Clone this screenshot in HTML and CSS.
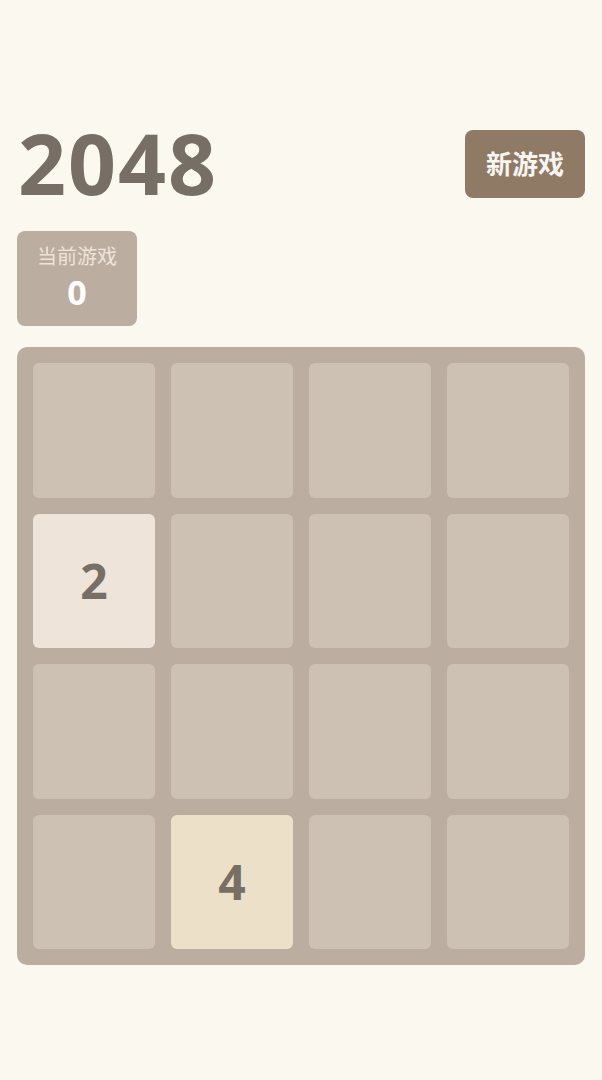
FILE: index.html
```html
<!DOCTYPE html>
<html lang="zh-CN">
<head>
    <meta charset="UTF-8">
    <meta name="viewport" content="width=device-width, initial-scale=1.0">
    <title>2048</title>
    <link rel="stylesheet" href="styles.css">
</head>
<body>

    <div class="game">
        <!-- Title and restart -->
        <div class="header">
            <h1 class="title">2048</h1>
            <button class="new-game">新游戏</button>
        </div>

        <!-- Score -->
        <div class="score-box">
            <div class="score-label">当前游戏</div>
            <div class="score-value">0</div>
        </div>

        <!-- Board -->
        <div class="board">
            <div class="cell"></div>
            <div class="cell"></div>
            <div class="cell"></div>
            <div class="cell"></div>

            <div class="cell tile-2">2</div>
            <div class="cell"></div>
            <div class="cell"></div>
            <div class="cell"></div>

            <div class="cell"></div>
            <div class="cell"></div>
            <div class="cell"></div>
            <div class="cell"></div>

            <div class="cell"></div>
            <div class="cell tile-4">4</div>
            <div class="cell"></div>
            <div class="cell"></div>
        </div>
    </div>

</body>
</html>
```

FILE: styles.css
```css
body {
    font-family: 'Open Sans', 'Noto Sans CJK SC', sans-serif;
    background-color: #faf8ef;
    margin: 0;
    color: #776e65;
}

.game {
    padding: 130px 17px 0;
}

.header {
    display: flex;
    justify-content: space-between;
    align-items: center;
    height: 68px;
}

.title {
    margin: -2px 0 0 1px;
    font-size: 84px;
    font-weight: 700;
    line-height: 68px;
    letter-spacing: 2px;
    color: #776e65;
}

.new-game {
    width: 120px;
    height: 68px;
    background-color: #8f7a66;
    color: #f9f6f2;
    border: none;
    border-radius: 8px;
    font-family: 'Noto Sans CJK SC', sans-serif;
    font-size: 26px;
    font-weight: 700;
    line-height: 30px;
    padding: 0 0 2px;
    cursor: pointer;
}

.score-box {
    margin-top: 33px;
    width: 120px;
    height: 95px;
    box-sizing: border-box;
    padding-top: 10px;
    background-color: #bbada0;
    border-radius: 8px;
    display: flex;
    flex-direction: column;
    align-items: center;
}

.score-label {
    font-family: 'Noto Sans CJK SC', sans-serif;
    font-size: 20px;
    line-height: 29px;
    color: #eee4da;
}

.score-value {
    font-size: 34px;
    font-weight: 700;
    line-height: 47px;
    margin-top: -1px;
    color: #fff;
}

.board {
    margin-top: 21px;
    height: 618px;
    box-sizing: border-box;
    padding: 16px;
    background-color: #bbada0;
    border-radius: 10px;
    display: grid;
    grid-template-columns: repeat(4, 1fr);
    grid-template-rows: repeat(4, 1fr);
    gap: 16px;
}

.cell {
    background-color: #cdc1b4;
    border-radius: 6px;
    display: flex;
    justify-content: center;
    align-items: center;
    font-size: 48px;
    font-weight: 700;
    color: #776e65;
}

.tile-2 {
    background-color: #eee4da;
}

.tile-4 {
    background-color: #ede0c8;
}
```
